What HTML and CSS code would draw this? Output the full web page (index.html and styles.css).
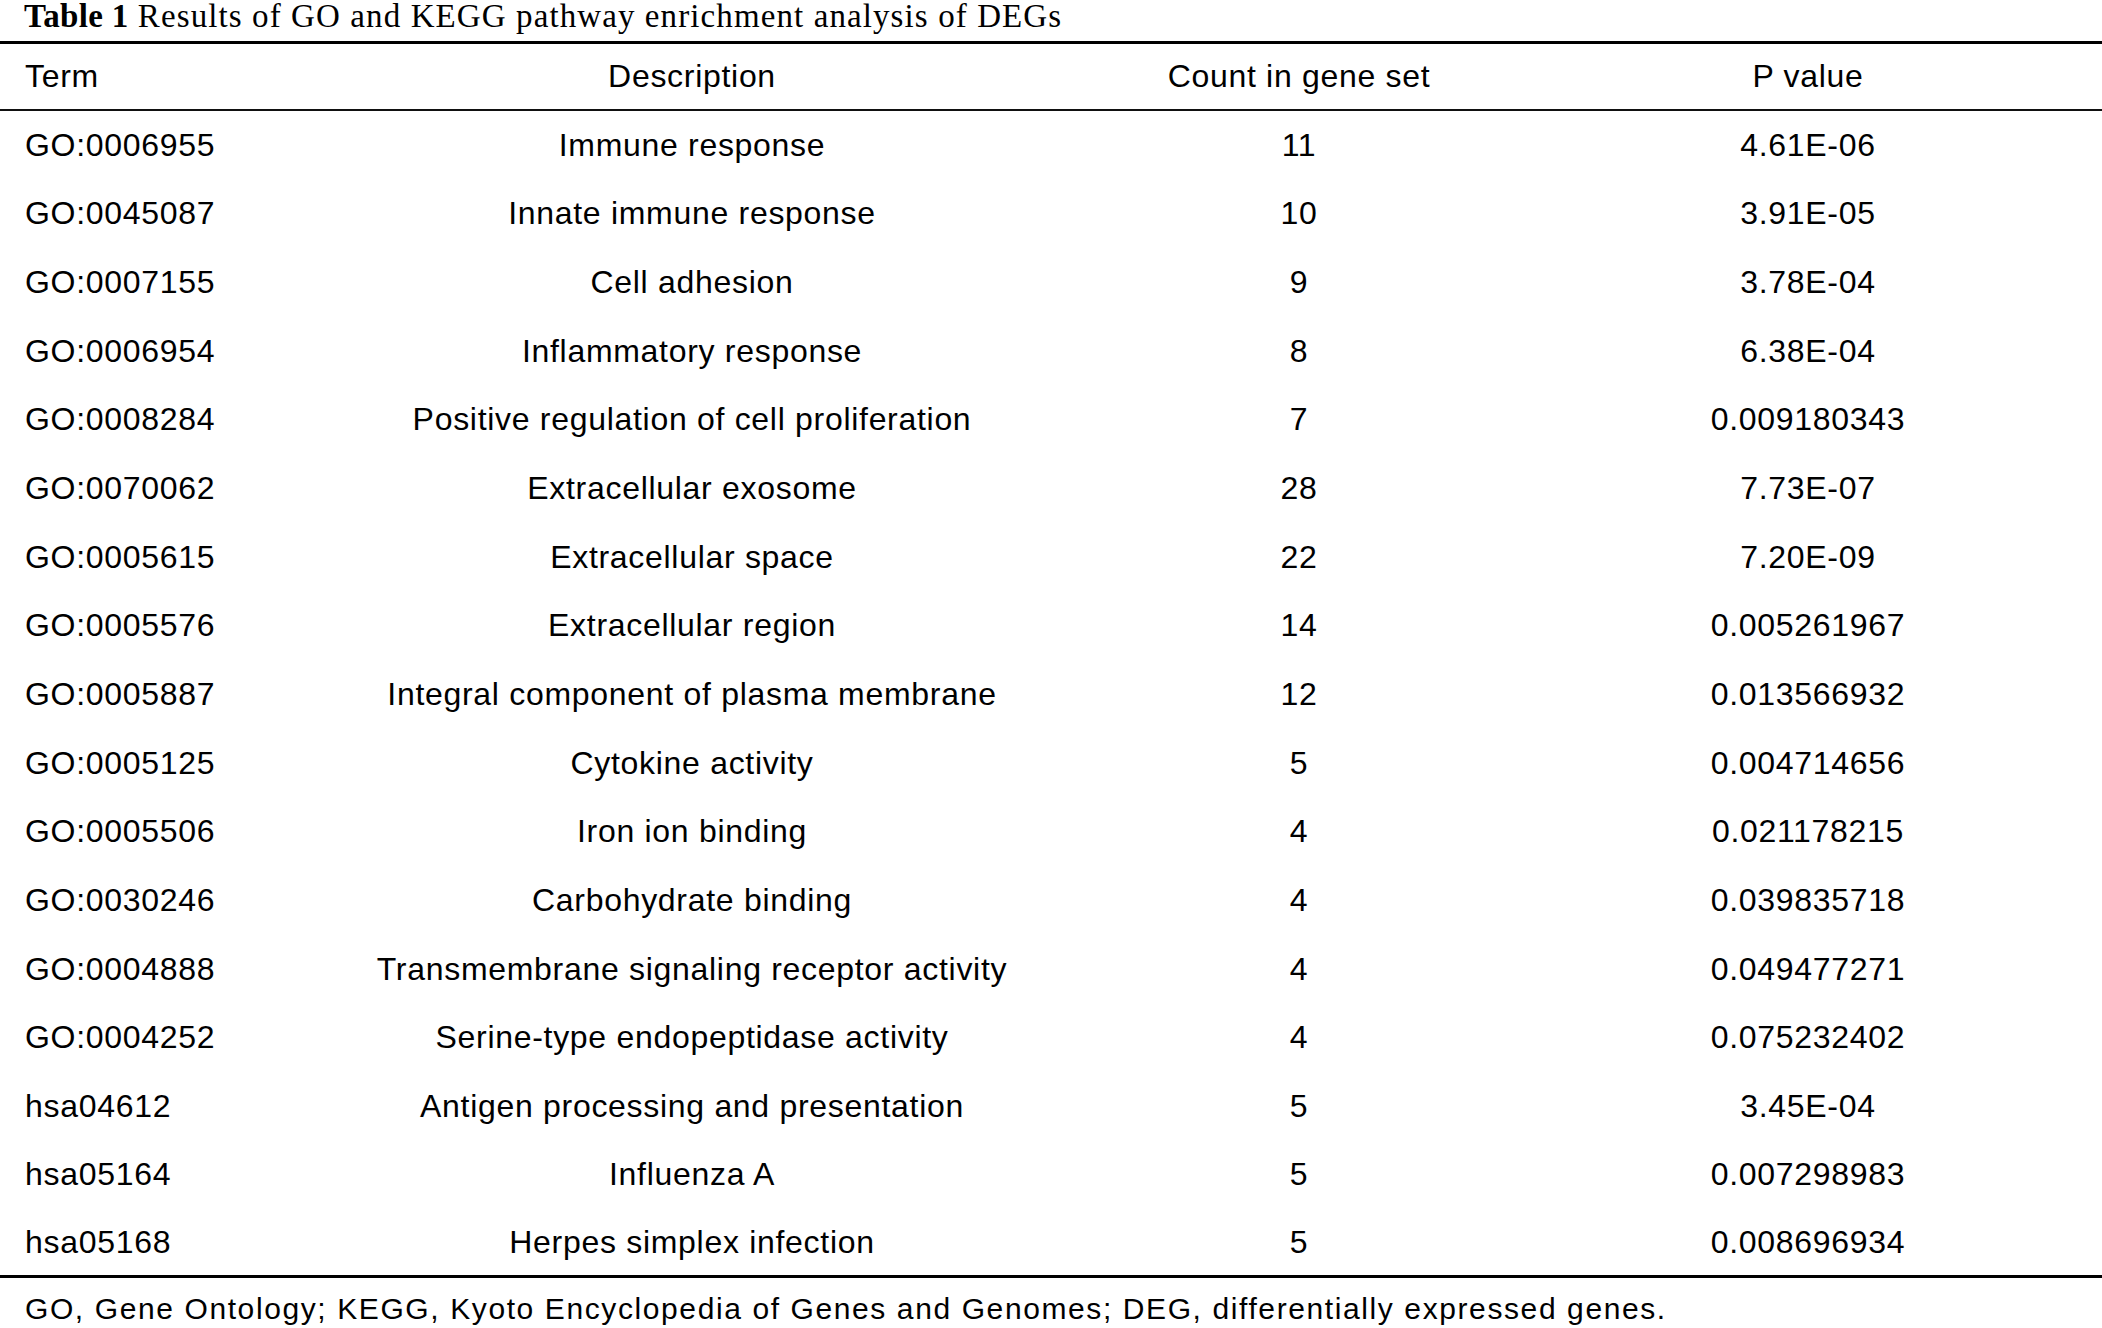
FILE: index.html
```html
<!DOCTYPE html>
<html lang="en">
<head>
<meta charset="utf-8">
<title>Table 1</title>
<link rel="stylesheet" href="styles.css">
</head>
<body>
<div class="page">
  <div class="caption"><b>Table 1</b> Results of GO and KEGG pathway enrichment analysis of DEGs</div>
  <table class="tbl">
    <colgroup>
      <col class="c1"><col class="c2"><col class="c3"><col class="c4">
    </colgroup>
    <thead>
      <tr><th class="left">Term</th><th>Description</th><th>Count in gene set</th><th>P value</th></tr>
    </thead>
    <tbody>
      <tr><td class="left">GO:0006955</td><td>Immune response</td><td>11</td><td>4.61E-06</td></tr>
      <tr><td class="left">GO:0045087</td><td>Innate immune response</td><td>10</td><td>3.91E-05</td></tr>
      <tr><td class="left">GO:0007155</td><td>Cell adhesion</td><td>9</td><td>3.78E-04</td></tr>
      <tr><td class="left">GO:0006954</td><td>Inflammatory response</td><td>8</td><td>6.38E-04</td></tr>
      <tr><td class="left">GO:0008284</td><td>Positive regulation of cell proliferation</td><td>7</td><td>0.009180343</td></tr>
      <tr><td class="left">GO:0070062</td><td>Extracellular exosome</td><td>28</td><td>7.73E-07</td></tr>
      <tr><td class="left">GO:0005615</td><td>Extracellular space</td><td>22</td><td>7.20E-09</td></tr>
      <tr><td class="left">GO:0005576</td><td>Extracellular region</td><td>14</td><td>0.005261967</td></tr>
      <tr><td class="left">GO:0005887</td><td>Integral component of plasma membrane</td><td>12</td><td>0.013566932</td></tr>
      <tr><td class="left">GO:0005125</td><td>Cytokine activity</td><td>5</td><td>0.004714656</td></tr>
      <tr><td class="left">GO:0005506</td><td>Iron ion binding</td><td>4</td><td>0.021178215</td></tr>
      <tr><td class="left">GO:0030246</td><td>Carbohydrate binding</td><td>4</td><td>0.039835718</td></tr>
      <tr><td class="left">GO:0004888</td><td>Transmembrane signaling receptor activity</td><td>4</td><td>0.049477271</td></tr>
      <tr><td class="left">GO:0004252</td><td>Serine-type endopeptidase activity</td><td>4</td><td>0.075232402</td></tr>
      <tr><td class="left">hsa04612</td><td>Antigen processing and presentation</td><td>5</td><td>3.45E-04</td></tr>
      <tr><td class="left">hsa05164</td><td>Influenza A</td><td>5</td><td>0.007298983</td></tr>
      <tr><td class="left">hsa05168</td><td>Herpes simplex infection</td><td>5</td><td>0.008696934</td></tr>
    </tbody>
  </table>
  <div class="note">GO, Gene Ontology; KEGG, Kyoto Encyclopedia of Genes and Genomes; DEG, differentially expressed genes.</div>
</div>
</body>
</html>
```
FILE: styles.css
```css
html, body {
  margin: 0;
  padding: 0;
  background: #fff;
}
.page {
  width: 2102px;
  color: #000;
}
.caption {
  font-family: "Liberation Serif", "Times New Roman", serif;
  font-size: 33px;
  letter-spacing: 1.1px;
  line-height: 33px;
  height: 41px;
  padding-left: 24px;
  box-sizing: border-box;
  white-space: nowrap;
}
.caption b {
  font-weight: bold;
  letter-spacing: 0.3px;
}
.tbl {
  width: 2102px;
  border-collapse: collapse;
  table-layout: fixed;
  font-family: "Liberation Sans", Arial, sans-serif;
  font-size: 32px;
  letter-spacing: 0.7px;
  border-top: 3px solid #000;
  border-bottom: 3px solid #000;
}
.c1 { width: 300px; }
.c2 { width: 784px; }
.c3 { width: 430px; }
.c4 { width: 588px; }
.tbl th {
  font-weight: normal;
  text-align: center;
  height: 65px;
  padding: 0;
  vertical-align: middle;
  border-bottom: 2px solid #111;
  white-space: nowrap;
}
.tbl td {
  text-align: center;
  height: 68.65px;
  padding: 2px 0 0 0;
  box-sizing: border-box;
  vertical-align: middle;
  white-space: nowrap;
}
.tbl .left {
  text-align: left;
  padding-left: 25px;
}
.note {
  font-family: "Liberation Sans", Arial, sans-serif;
  font-size: 30px;
  letter-spacing: 1.6px;
  line-height: 46px;
  padding-top: 8px;
  padding-left: 25px;
  white-space: nowrap;
}
```
